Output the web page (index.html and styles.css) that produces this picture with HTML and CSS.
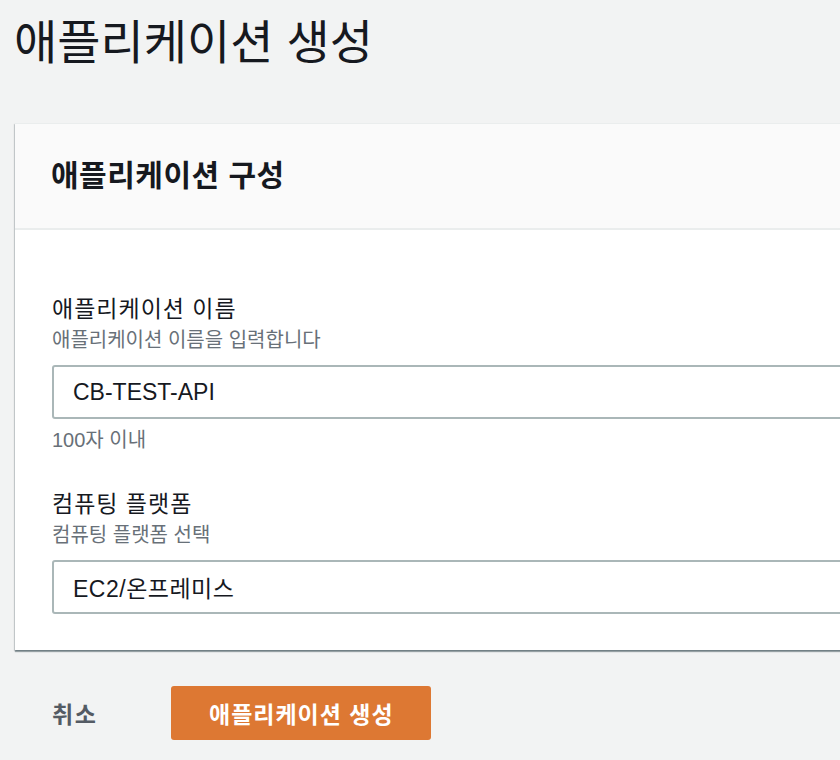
FILE: index.html
```html
<!DOCTYPE html>
<html lang="ko">
<head>
<meta charset="utf-8">
<title>애플리케이션 생성</title>
<link rel="stylesheet" href="styles.css">
</head>
<body>
<div class="page">
  <h1 class="title">애플리케이션 생성</h1>
  <section class="panel">
    <header class="panel-header">
      <h2 class="panel-title">애플리케이션 구성</h2>
    </header>
    <div class="panel-body">
      <div class="field">
        <label class="label" for="app-name">애플리케이션 이름</label>
        <div class="desc">애플리케이션 이름을 입력합니다</div>
        <input class="input" id="app-name" type="text" value="CB-TEST-API" readonly>
        <div class="hint">100자 이내</div>
      </div>
      <div class="field">
        <div class="label">컴퓨팅 플랫폼</div>
        <div class="desc">컴퓨팅 플랫폼 선택</div>
        <div class="input select">EC2/온프레미스</div>
      </div>
    </div>
  </section>
  <div class="actions">
    <button class="btn-link" type="button">취소</button>
    <button class="btn-primary" type="button">애플리케이션 생성</button>
  </div>
</div>
</body>
</html>
```
FILE: styles.css
```css
html, body {
  margin: 0;
  padding: 0;
  background: #f2f3f3;
  overflow: hidden;
}
body {
  font-family: "Liberation Sans", "Noto Sans CJK KR", sans-serif;
  color: #16191f;
}
.page {
  width: 840px;
  height: 760px;
  overflow: hidden;
}
.title {
  margin: 0;
  padding: 12px 0 0 14px;
  font-size: 47px;
  line-height: 62px;
  font-weight: 400;
  color: #16191f;
}
.panel {
  margin: 49px -40px 0 15px;
  background: #ffffff;
  border-top: 1px solid #eaeded;
  box-shadow: 0 2px 1px 0 rgba(0, 28, 36, 0.35), 1px 1px 1px 0 rgba(0, 28, 36, 0.15), -1px 1px 1px 0 rgba(0, 28, 36, 0.15);
}
.panel-header {
  height: 104px;
  display: flex;
  align-items: center;
  padding-left: 36px;
  background: #fafafa;
  border-bottom: 2px solid #eaeded;
}
.panel-title {
  margin: 0;
  font-size: 30px;
  line-height: 36px;
  letter-spacing: 0.5px;
  font-weight: 700;
  color: #16191f;
}
.panel-body {
  padding: 64px 0 36px 37px;
  display: flex;
  flex-direction: column;
  gap: 36px;
}
.field {
  display: flex;
  flex-direction: column;
}
.label {
  font-size: 23px;
  line-height: 30px;
  letter-spacing: 1px;
  color: #16191f;
}
.desc {
  margin-top: 3px;
  font-size: 20px;
  line-height: 26px;
  color: #687078;
}
.input {
  box-sizing: border-box;
  margin-top: 12px;
  height: 54px;
  width: 100%;
  padding: 0 0 0 19px;
  border: 2px solid #aab7b8;
  border-radius: 3px;
  background: #ffffff;
  font-family: inherit;
  font-size: 23px;
  color: #16191f;
  outline: none;
}
.select {
  display: flex;
  align-items: center;
  letter-spacing: 0.5px;
}
.hint {
  margin-top: 8px;
  font-size: 20px;
  line-height: 26px;
  color: #687078;
}
.actions {
  display: flex;
  align-items: center;
  gap: 74px;
  margin-top: 36px;
  padding-left: 52px;
}
.btn-link {
  border: 0;
  background: transparent;
  padding: 0;
  font-family: inherit;
  font-size: 23px;
  letter-spacing: 1.5px;
  font-weight: 700;
  color: #545b64;
}
.btn-primary {
  width: 260px;
  height: 54px;
  border: 0;
  border-radius: 3px;
  background: #dd7833;
  font-family: inherit;
  font-size: 23px;
  letter-spacing: 1px;
  font-weight: 700;
  color: #ffffff;
}
```
